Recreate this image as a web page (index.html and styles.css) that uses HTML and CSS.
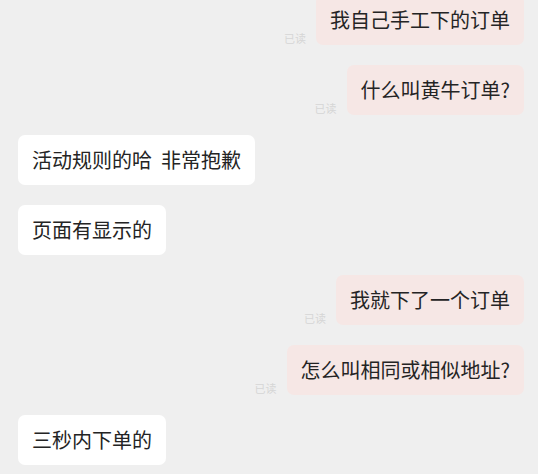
FILE: index.html
```html
<!DOCTYPE html>
<html>

<head lang="zh">
  <meta charset="UTF-8">
  <title>聊天记录</title>
  <link rel="stylesheet" href="styles.css">
</head>

<body>
  <div class="chat">
    <div class="row me">
      <span class="read">已读</span>
      <div class="bubble">我自己手工下的订单</div>
    </div>
    <div class="row me">
      <span class="read">已读</span>
      <div class="bubble">什么叫黄牛订单?</div>
    </div>
    <div class="row">
      <div class="bubble">活动规则的哈&nbsp;&nbsp;非常抱歉</div>
    </div>
    <div class="row">
      <div class="bubble">页面有显示的</div>
    </div>
    <div class="row me">
      <span class="read">已读</span>
      <div class="bubble">我就下了一个订单</div>
    </div>
    <div class="row me">
      <span class="read">已读</span>
      <div class="bubble">怎么叫相同或相似地址?</div>
    </div>
    <div class="row">
      <div class="bubble">三秒内下单的</div>
    </div>
  </div>
</body>

</html>
```

FILE: styles.css
```css
* {
  margin: 0;
  padding: 0;
}

html,
body {
  height: 100%;
  overflow: hidden;
}

body {
  background: #efefef;
  font-family: "Noto Sans CJK SC", "Noto Sans", sans-serif;
  color: #242424;
}

.chat {
  display: flex;
  flex-direction: column;
  gap: 20px;
  margin-top: -5px;
  padding: 0 14px 0 18px;
}

.row {
  display: flex;
  align-items: flex-end;
  gap: 10px;
}

.row.me {
  justify-content: flex-end;
}

.bubble {
  background: #fff;
  border-radius: 7px;
  padding: 13px 14px;
  font-size: 20px;
  line-height: 24px;
  white-space: nowrap;
}

.me .bubble {
  background: #f6e7e5;
}

.read {
  font-size: 11px;
  line-height: 14px;
  color: #d6d6d6;
}
```
